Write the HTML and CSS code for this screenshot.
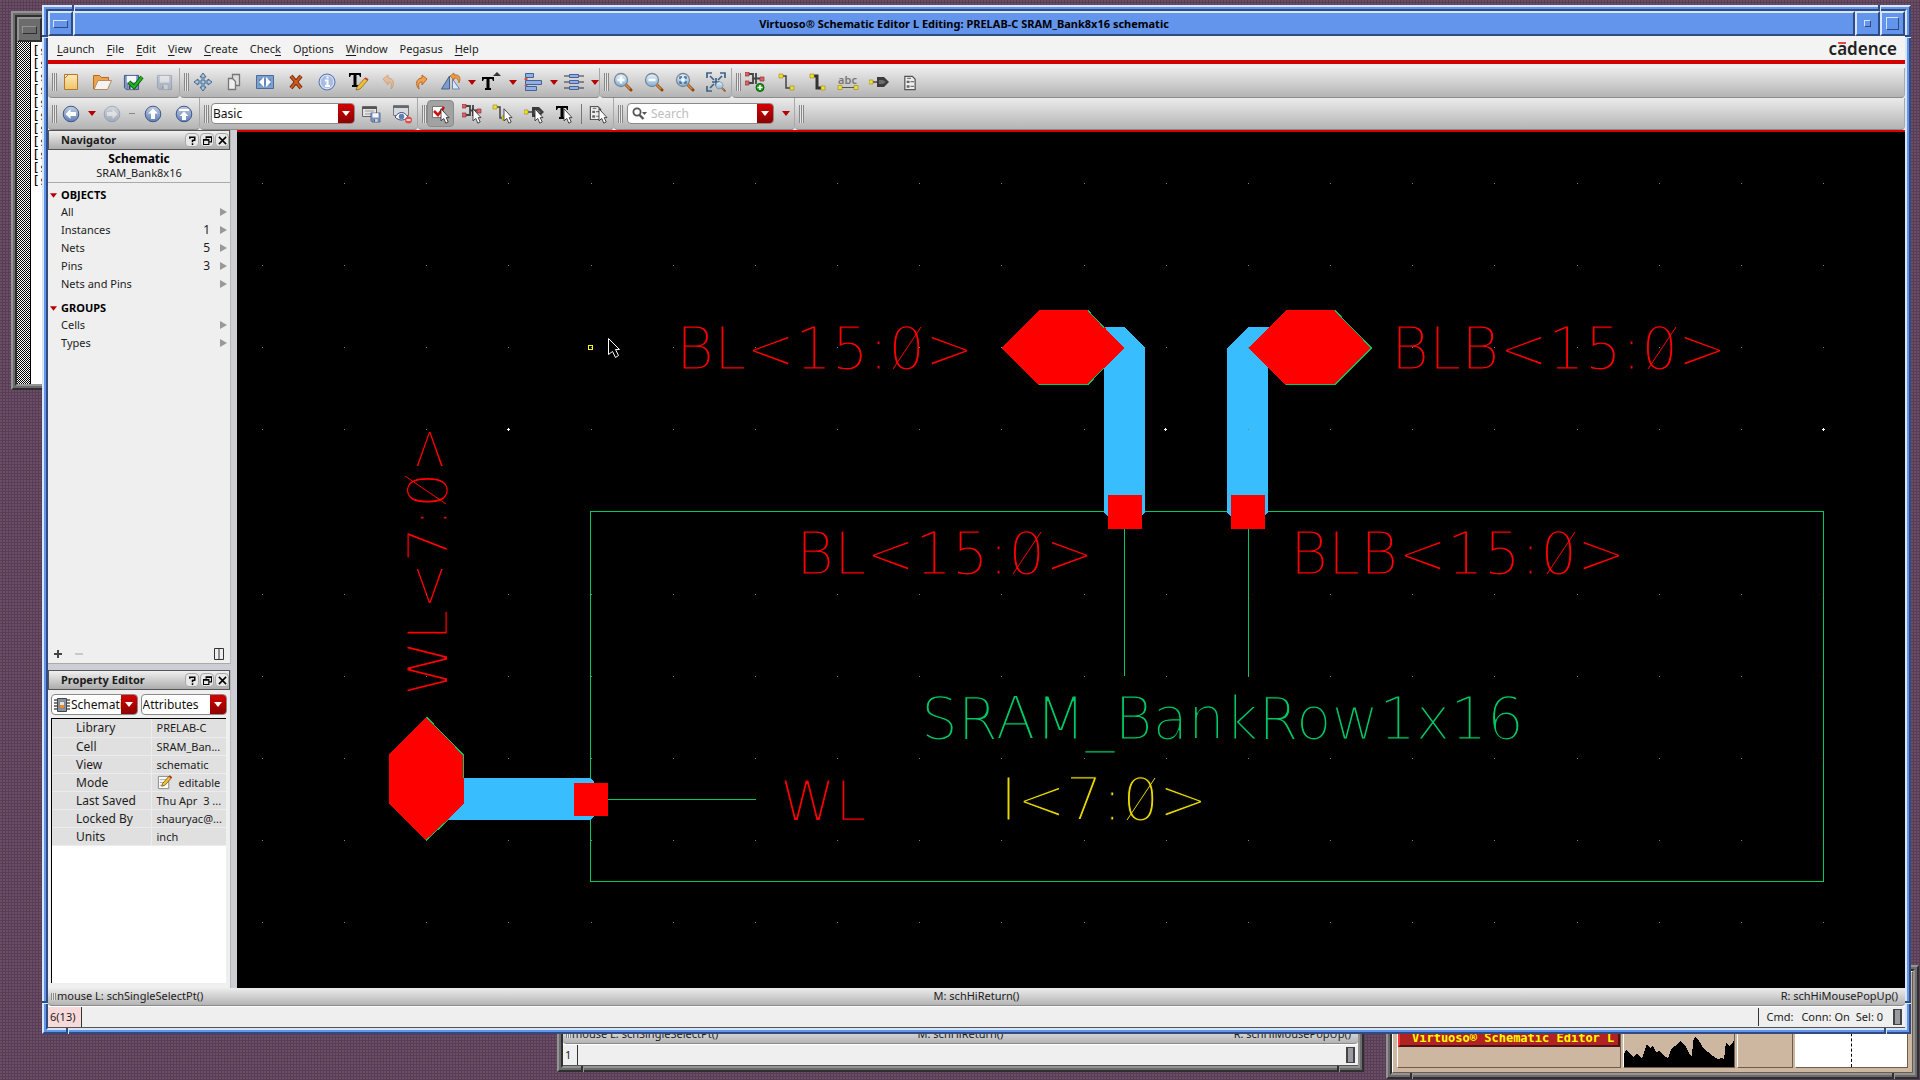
FILE: index.html
```html
<!DOCTYPE html>
<html lang="en">
<head>
<meta charset="utf-8">
<title>Virtuoso Schematic Editor L Editing: PRELAB-C SRAM_Bank8x16 schematic</title>
<link rel="stylesheet" href="styles.css">
</head>
<body>
<svg class="defs" aria-hidden="true">
  <defs>
    <linearGradient id="g-folder" x1="0" y1="0" x2="0" y2="1"><stop offset="0" stop-color="#fdeab8"/><stop offset="1" stop-color="#efc46a"/></linearGradient>
    <linearGradient id="g-round" x1="0" y1="0" x2="0" y2="1"><stop offset="0" stop-color="#c3cfe2"/><stop offset="1" stop-color="#5f7db5"/></linearGradient>
    <linearGradient id="g-lens" x1="0" y1="0" x2="0" y2="1"><stop offset="0" stop-color="#e8f4fc"/><stop offset="1" stop-color="#7fb0d8"/></linearGradient>
    <symbol id="tri" viewBox="0 0 8 5"><path d="M0 0h8L4 5z"/></symbol>
    <symbol id="cursor" viewBox="0 0 12 20"><path d="M1 1v15l3.500-3 2.500 6 3-1.500-2.500-5.500H11z" fill="#fff" stroke="#222"/></symbol>
    <symbol id="disk" viewBox="0 0 18 18"><path d="M1.500 1.500h15v15h-13l-2-2z" fill="#7c97c6" stroke="#3d5280"/><path d="M4 2h10v7H4z" fill="#f4f6fa"/><path d="M5 11h8v5.500H5z" fill="#cfd6e2" stroke="#55658a" stroke-width=".7"/><path d="M6 12h2v4H6z" fill="#33446c"/></symbol>
    <symbol id="round" viewBox="0 0 18 18"><circle cx="9" cy="9" r="7.800" fill="url(#g-round)" stroke="#3e578c"/></symbol>
    <symbol id="lens" viewBox="0 0 20 20"><path d="M12 12l6 6" stroke="#8b4a12" stroke-width="3" stroke-linecap="round"/><path d="M12 12l5 5" stroke="#e08a3a" stroke-width="1.500"/><circle cx="8" cy="8" r="6.500" fill="url(#g-lens)" stroke="#7d868f" stroke-width="1.300"/></symbol>
    <symbol id="doc" viewBox="0 0 14 17"><path d="M1.500 1.500h8l3 3v11h-11z" fill="#eee" stroke="#555" stroke-width="1.300"/><path d="M3.500 6h3v2.500h-3zm0 5h3v2.500h-3z" fill="#666"/><path d="M7.500 7h4m-4 5h4M4 3.500h4" stroke="#777" stroke-width="1.300"/></symbol>
    <symbol id="inst" viewBox="0 0 20 16"><path d="M3 2h5v9H3M11 1v11M8 6.500h9" fill="none" stroke="#444" stroke-width="1.800"/><path d="M0 0h4v4H0zm0 9h4v4H0zm15-4h4v4h-4z" fill="#e06068" stroke="#903038" stroke-width=".7"/></symbol>
    <symbol id="gate" viewBox="0 0 20 10"><path d="M3 5h6" stroke="#444" stroke-width="1.500"/><path d="M0 3h4v4H0z" fill="#f2dc30" stroke="#998a10" stroke-width=".6"/><path d="M8 0h7l5 5-5 5H8z" fill="#3c3c3c"/><path d="M10 3h4l3 2-3 2h-4z" fill="#6c6c6c"/></symbol>
    <symbol id="chipdoc" viewBox="0 0 16 16"><path d="M3.500 1.500h9v13h-9z" fill="#8a93a0" stroke="#444"/><path d="M0 3h3M0 6h3M0 9h3M0 12h3M13 3h3M13 6h3M13 9h3M13 12h3" stroke="#555" stroke-width="1.500"/><path d="M5.500 4.500h5v7h-5z" fill="#dfe4ea" stroke="#666" stroke-width=".6"/><path d="M6 8h4v3H6z" fill="#f08a20"/></symbol>
  </defs>
</svg>

<!-- Terminal behind the editor -->
<section class="window gray terminal" aria-label="Terminal">
  <div class="frame">
    <div class="titlebar"><button class="tb-btn" aria-label="Window menu"><span class="bar"></span></button></div>
    <div class="term-body">
      <div class="term-scroll"></div>
      <pre class="term-text">[s
[s
[s
[s
[s
[s
[s
[s
[s
[s
[s</pre>
    </div>
  </div>
</section>

<!-- Second editor window, mostly hidden -->
<section class="window gray editor-back" aria-label="Second editor">
  <div class="frame">
    <div class="status mouse-row"><span class="grip tiny"></span><span>mouse L: schSingleSelectPt()</span><span class="mid">M: schHiReturn()</span><span class="end">R: schHiMousePopUp()</span></div>
    <div class="status bottom-row"><span class="num">1</span><span class="led"></span></div>
  </div>
  <i class="notch bl"></i><i class="notch br"></i>
</section>

<!-- Front panel -->
<section class="window gray panel" aria-label="Window manager panel">
  <div class="frame">
    <div class="panel-body">
      <div class="tasks"><button class="task">Virtuoso® Schematic Editor L l</button></div>
      <div class="load">
        <svg viewBox="0 0 110 40" preserveAspectRatio="none" shape-rendering="crispEdges"><path d="M0 40V27l2-4 4 3 3 4 4-3 3 2 2 3 3-9 2-6 3 4 3-2 3 6 4-1 4 5 4 2 3-8 3-4 3-1 3-4 3 2 3 4 3 6 3 4 1-16 2-4 3 2 3 5 3 5 4 3 5 4 5 3 3-1 3 1 2-17 3 4 3-2 3-5 3 5 2-4 1 3v26z"/></svg>
      </div>
      <div class="blank"></div>
      <div class="pager"></div>
    </div>
  </div>
  <i class="notch bl"></i><i class="notch br"></i>
</section>

<!-- Schematic editor -->
<main class="window blue editor">
  <div class="frame">
    <header class="titlebar">
      <button class="tb-btn" aria-label="Window menu"><span class="bar"></span></button>
      <h1 class="title">Virtuoso® Schematic Editor L Editing: PRELAB-C SRAM_Bank8x16 schematic</h1>
      <button class="tb-btn" aria-label="Minimize"><span class="dot"></span></button>
      <button class="tb-btn" aria-label="Maximize"><span class="box"></span></button>
    </header>

    <nav class="menubar">
      <button><u>L</u>aunch</button><button><u>F</u>ile</button><button><u>E</u>dit</button><button><u>V</u>iew</button><button><u>C</u>reate</button><button>Chec<u>k</u></button><button>O<u>p</u>tions</button><button><u>W</u>indow</button><button>Pegasus</button><button><u>H</u>elp</button>
      <span class="brand">c<span class="macron">a</span>dence</span>
    </nav>

    <div class="toolbar">
      <div class="group"><span class="grip"></span>
        <button class="tool" aria-label="New"><svg viewBox="0 0 20 20"><path d="M3.500 2.500h13v15h-13z" fill="url(#g-folder)" stroke="#b5782a"/><path d="M3.500 6.500l4-4h-4z" fill="#fff6dc" stroke="#b5782a"/></svg></button>
        <button class="tool" aria-label="Open"><svg viewBox="0 0 20 20"><path d="M1.500 17V3.500h6l2 2h7V10" fill="#eea24c" stroke="#b5691e"/><path d="M2 17.500L6 8.500h13.500l-4 9z" fill="#f4f4f4" stroke="#b98a58"/></svg></button>
        <button class="tool" aria-label="Check and save"><svg viewBox="0 0 20 20"><use href="#disk" x="0" y="2" width="17" height="17"/><path d="M6 10l5 5 8-10" fill="none" stroke="#0a5a0a" stroke-width="4"/><path d="M6 10l5 5 8-10" fill="none" stroke="#22b322" stroke-width="2.400"/></svg></button>
        <button class="tool" aria-label="Save"><svg viewBox="0 0 20 20" opacity=".35"><use href="#disk" x="2" y="2" width="17" height="17"/></svg></button>
      </div>
      <div class="group"><span class="grip"></span>
        <button class="tool" aria-label="Move"><svg viewBox="0 0 20 20"><path d="M10 1l3 4h-2v4h4V7l4 3-4 3v-2h-4v4h2l-3 4-3-4h2v-4H5v2l-4-3 4-3v2h4V5H7z" fill="#a9c7e2" stroke="#44678c"/></svg></button>
        <button class="tool" aria-label="Copy"><svg viewBox="0 0 20 20"><path d="M8.500 2.500h7v11h-7z" fill="#ddd" stroke="#777" stroke-width="1.300"/><path d="M4.500 6.500h4l3 3v8h-7z" fill="#eee" stroke="#777" stroke-width="1.300"/></svg></button>
        <button class="tool" aria-label="Stretch"><svg viewBox="0 0 20 20"><path d="M1.500 3.500h17v13h-17z" fill="#7d9fce" stroke="#4d6b99"/><path d="M4 7h12v6H4z" fill="#5f86bd"/><path d="M9 5v10l-5-5zM11 5v10l5-5z" fill="#fff"/></svg></button>
        <button class="tool" aria-label="Delete"><svg viewBox="0 0 20 20"><path d="M5 4l10 12M15 4L5 16" stroke="#6e2608" stroke-width="4"/><path d="M5 4l10 12M15 4L5 16" stroke="#cf5a1e" stroke-width="2"/></svg></button>
        <button class="tool" aria-label="Properties"><svg viewBox="0 0 20 20"><circle cx="10" cy="10" r="8" fill="#a9bce4" stroke="#5b76b0"/><circle cx="10" cy="10" r="6.700" fill="none" stroke="#dde6f6"/><path d="M8 8.500h2.500v5.500M8 14h5M9.500 5.500h2" stroke="#fff" stroke-width="2" fill="none"/></svg></button>
        <button class="tool" aria-label="Edit label"><svg viewBox="0 0 20 20"><path d="M1 1h12v4h-1l-1-2H8.500v10H10v2H4v-2h1.500V3H3L2 5H1z"/><path d="M8 18l1-3 8-9 3 2-8 9z" fill="#f0c030" stroke="#7a5a10" stroke-width=".7"/><path d="M17 6l3 2" stroke="#c04040" stroke-width="2"/></svg></button>
        <button class="tool" aria-label="Undo"><svg viewBox="0 0 20 20" opacity=".5"><path d="M4 7l5-4v3c6 0 7 7 3 11 1-5-0-7-3-7v3z" fill="#f2a860" stroke="#c87830"/></svg></button>
        <button class="tool" aria-label="Redo"><svg viewBox="0 0 20 20"><path d="M17 7l-5-4v3c-6 0-7 7-3 11-1-5 0-7 3-7v3z" fill="#f2a050" stroke="#b86820"/></svg></button>
        <div class="split"><button class="tool" aria-label="Rotate"><svg viewBox="0 0 20 20"><path d="M8.500 4v13h-8z" fill="#7f9cc8" stroke="#44608f"/><path d="M11.500 7v10h7z" fill="#dde6f4" stroke="#6a83ae"/><path d="M9 4l4-3v2c6-1 7 4 5 8-1-4-2-5-5-5v2z" fill="#ee9a48" stroke="#a8601c" stroke-width=".7"/></svg></button><button class="arrow" aria-label="Rotate options"><svg><use href="#tri"/></svg></button></div>
        <div class="split"><button class="tool" aria-label="Text size"><svg viewBox="0 0 20 20"><path d="M0 5h12v4h-1l-1-2H7.500v9H9v2H3v-2h1.500V7H2L1 9H0z"/><path d="M11 4l4-4 4 4z" fill="#333"/></svg></button><button class="arrow" aria-label="Text options"><svg><use href="#tri"/></svg></button></div>
        <div class="split"><button class="tool" aria-label="Align"><svg viewBox="0 0 20 20"><path d="M2.500 1.500h8v4h-8zM2.500 8.500h16v4h-16zM2.500 14.500h11v4h-11z" fill="#93aee0" stroke="#45619b"/><path d="M3 6v2m0 5v1" stroke="#e05030" stroke-width="3"/></svg></button><button class="arrow" aria-label="Align options"><svg><use href="#tri"/></svg></button></div>
        <div class="split"><button class="tool" aria-label="Distribute"><svg viewBox="0 0 20 20"><path d="M0 4h20M0 10h20M0 16h20" stroke="#333"/><path d="M5.500 2.500h9v3h-9zM5.500 8.500h9v3h-9zM5.500 14.500h9v3h-9z" fill="#93aee0" stroke="#45619b"/></svg></button><button class="arrow" aria-label="Distribute options"><svg><use href="#tri"/></svg></button></div>
      </div>
      <div class="group"><span class="grip"></span>
        <button class="tool" aria-label="Zoom in"><svg viewBox="0 0 20 20"><use href="#lens"/><path d="M8 4.500v7M4.500 8h7" stroke="#fff" stroke-width="2.500"/></svg></button>
        <button class="tool" aria-label="Zoom out"><svg viewBox="0 0 20 20"><use href="#lens"/><path d="M4.500 8h7" stroke="#fff" stroke-width="2.500"/></svg></button>
        <button class="tool" aria-label="Zoom fit"><svg viewBox="0 0 20 20"><use href="#lens"/><path d="M5 7V5h2m2 0h2v2m0 2v2H9m-2 0H5V9" fill="none" stroke="#4a6d98" stroke-width="1.500"/><path d="M6.500 6.500h3v3h-3z" fill="#fff"/></svg></button>
        <button class="tool" aria-label="Zoom to selected"><svg viewBox="0 0 20 20"><path d="M1 6V1h5m8 0h5v5M6 19H1v-5M4 4l4 4m8-4l-4 4m-8 8l4-4M10 6v8m-4-4h8" fill="none" stroke="#3f6288" stroke-width="1.700"/><use href="#lens" x="9" y="9" width="11" height="11"/></svg></button>
      </div>
      <div class="group last"><span class="grip"></span>
        <button class="tool" aria-label="Create instance"><svg viewBox="0 0 20 20"><use href="#inst" width="20" height="16"/><circle cx="15" cy="15.500" r="4" fill="#1d9a1d" stroke="#0c5c0c"/><path d="M15 13v5m-2.500-2.500h5" stroke="#fff" stroke-width="1.500"/></svg></button>
        <button class="tool" aria-label="Create wire"><svg viewBox="0 0 20 20"><path d="M5 4h5v12h5" fill="none" stroke="#444" stroke-width="1.500"/><path d="M3 2h4v4H3zm11 12h4v4h-4z" fill="#f2dc30" stroke="#998a10" stroke-width=".6"/></svg></button>
        <button class="tool" aria-label="Create wide wire"><svg viewBox="0 0 20 20"><path d="M5 4h5v12h5" fill="none" stroke="#333" stroke-width="3"/><path d="M3 2h4v4H3zm11 12h4v4h-4z" fill="#f2dc30" stroke="#998a10" stroke-width=".6"/></svg></button>
        <button class="tool abc" aria-label="Create wire name"><span>abc</span><svg viewBox="0 0 20 5"><path d="M2 2.500h16" stroke="#555"/><path d="M0 .5h4v4H0zm16 0h4v4h-4z" fill="#f2dc30" stroke="#998a10" stroke-width=".6"/></svg></button>
        <button class="tool" aria-label="Create pin"><svg viewBox="0 0 20 20"><use href="#gate" y="5" width="20" height="10"/></svg></button>
        <button class="tool" aria-label="Create note"><svg viewBox="0 0 20 20"><use href="#doc" x="3" y="3" width="14" height="16"/></svg></button>
      </div>
    </div>

    <div class="toolbar second">
      <div class="group"><span class="grip"></span>
        <div class="split"><button class="tool" aria-label="Back"><svg viewBox="0 0 18 18"><use href="#round"/><path d="M3.500 9l5-5v3H14v4H8.500v3z" fill="#fff"/></svg></button><button class="arrow" aria-label="History"><svg><use href="#tri"/></svg></button></div>
        <div class="split"><button class="tool dim" aria-label="Forward"><svg viewBox="0 0 18 18"><use href="#round"/><path d="M14.500 9l-5-5v3H4v4h5.500v3z" fill="#fff"/></svg></button><button class="arrow dash" aria-label="Forward history"></button></div>
        <button class="tool" aria-label="Up"><svg viewBox="0 0 18 18"><use href="#round"/><path d="M9 3.500l5 5h-3V14H7V8.500H4z" fill="#fff"/></svg></button>
        <button class="tool" aria-label="Top"><svg viewBox="0 0 18 18"><use href="#round"/><path d="M4 4h10v2H4zM9 6.500l4.500 4.500H11v4H7v-4H4.500z" fill="#fff"/></svg></button>
      </div>
      <div class="group"><span class="grip"></span>
        <div class="combo workspace"><select aria-label="Workspace"><option>Basic</option></select><span class="drop"><svg><use href="#tri"/></svg></span></div>
        <button class="tool" aria-label="Save workspace"><svg viewBox="0 0 20 20"><path d="M1.500 2.500h14v10h-14z" fill="#e4e4e4" stroke="#666"/><path d="M1 4h15" stroke="#555" stroke-width="2"/><path d="M4 7h9M4 10h9" stroke="#999"/><use href="#disk" x="9" y="8" width="11" height="11"/></svg></button>
        <button class="tool" aria-label="Toggle visibility"><svg viewBox="0 0 20 20"><path d="M1.500 1.500h15v10h-15z" fill="#d6dade" stroke="#777"/><path d="M1 3h16" stroke="#667" stroke-width="2"/><path d="M3 13c4-6 9-6 13 0-4 4-9 4-13 0z" fill="#fff" stroke="#446"/><circle cx="9.500" cy="12.500" r="2.800" fill="#5580b8"/><circle cx="16.500" cy="16" r="3.500" fill="#dd5050"/><path d="M14.500 16h4" stroke="#fff" stroke-width="1.500"/></svg></button>
      </div>
      <div class="group"><span class="grip"></span>
        <button class="tool on" aria-label="Select"><svg viewBox="0 0 20 20"><path d="M1.500 2.500h11v11h-11z" fill="#fff" stroke="#777"/><path d="M3 7l4 4 6-8" fill="none" stroke="#d01010" stroke-width="2.500"/><use href="#cursor" x="9" y="4" width="10" height="16"/></svg></button>
        <button class="tool" aria-label="Select instances"><svg viewBox="0 0 20 20"><use href="#inst" width="20" height="16"/><use href="#cursor" x="10" y="4" width="10" height="16"/></svg></button>
        <button class="tool" aria-label="Select wires"><svg viewBox="0 0 20 20"><path d="M2 3h5v11h4" fill="none" stroke="#444" stroke-width="1.500"/><path d="M0 1h4v4H0zm9 11h4v4H9z" fill="#f2dc30" stroke="#998a10" stroke-width=".6"/><use href="#cursor" x="10" y="4" width="10" height="16"/></svg></button>
        <button class="tool" aria-label="Select pins"><svg viewBox="0 0 20 20"><use href="#gate" y="3" width="20" height="10"/><use href="#cursor" x="10" y="4" width="10" height="16"/></svg></button>
        <button class="tool" aria-label="Select text"><svg viewBox="0 0 20 20"><path d="M1 2h12v4h-1l-1-2H8.500v9H10v2H4v-2h1.500V4H3L2 6H1z"/><use href="#cursor" x="8" y="4" width="10" height="16"/></svg></button>
        <span class="rule"></span>
        <button class="tool" aria-label="Selection filter"><svg viewBox="0 0 20 20"><use href="#doc" x="1" y="1" width="13" height="16"/><use href="#cursor" x="10" y="4" width="10" height="16"/></svg></button>
      </div>
      <div class="group"><span class="grip"></span>
        <div class="combo search"><svg class="mag" viewBox="0 0 16 14"><circle cx="5" cy="5" r="3.600" fill="none" stroke="#555" stroke-width="1.800"/><path d="M7.500 8l4 4" stroke="#555" stroke-width="2.400"/><path d="M10 5h5l-2.500 3z" fill="#555"/></svg><input type="text" placeholder="Search" aria-label="Search"><span class="drop"><svg><use href="#tri"/></svg></span></div>
        <button class="arrow wide" aria-label="Search options"><svg><use href="#tri"/></svg></button>
      </div>
      <div class="group last"><span class="grip"></span></div>
    </div>

    <div class="work">
      <aside class="side">
        <section class="dock nav">
          <h2 class="dock-head"><span>Navigator</span><button aria-label="Help"><svg viewBox="0 0 10 10"><path d="M2 3V1.500h5.500V4.500L5 5v2M5 8v2" fill="none" stroke="#000" stroke-width="1.700"/></svg></button><button aria-label="Float"><svg viewBox="0 0 10 10"><path d="M3.500 3V1h6v5.500H7M3 1.500h7M.5 4h6v5.500h-6zM0 4.500h7" fill="none" stroke="#000" stroke-width="1.300"/></svg></button><button aria-label="Close"><svg viewBox="0 0 10 10"><path d="M1 1l8 8M9 1L1 9" stroke="#000" stroke-width="1.700"/></svg></button></h2>
          <div class="cellview"><strong>Schematic</strong><span>SRAM_Bank8x16</span></div>
          <h3><svg class="red-tri"><use href="#tri"/></svg>OBJECTS</h3>
          <ul>
            <li><span>All</span><i></i></li>
            <li><span>Instances</span><b>1</b><i></i></li>
            <li><span>Nets</span><b>5</b><i></i></li>
            <li><span>Pins</span><b>3</b><i></i></li>
            <li><span>Nets and Pins</span><i></i></li>
          </ul>
          <h3><svg class="red-tri"><use href="#tri"/></svg>GROUPS</h3>
          <ul>
            <li><span>Cells</span><i></i></li>
            <li><span>Types</span><i></i></li>
          </ul>
          <div class="dock-foot"><button aria-label="Add"><svg viewBox="0 0 10 10"><path d="M5 1v8M1 5h8" stroke="#444" stroke-width="2"/></svg></button><button aria-label="Remove"><svg viewBox="0 0 10 10"><path d="M1 5h8" stroke="#bbb" stroke-width="1.500"/></svg></button><button class="cols" aria-label="Columns"><svg viewBox="0 0 10 12"><path d="M.5.5h9v11h-9zM5 0v12" fill="none" stroke="#333"/></svg></button></div>
        </section>
        <section class="dock props">
          <h2 class="dock-head"><span>Property Editor</span><button aria-label="Help"><svg viewBox="0 0 10 10"><path d="M2 3V1.500h5.500V4.500L5 5v2M5 8v2" fill="none" stroke="#000" stroke-width="1.700"/></svg></button><button aria-label="Float"><svg viewBox="0 0 10 10"><path d="M3.500 3V1h6v5.500H7M3 1.500h7M.5 4h6v5.500h-6zM0 4.500h7" fill="none" stroke="#000" stroke-width="1.300"/></svg></button><button aria-label="Close"><svg viewBox="0 0 10 10"><path d="M1 1l8 8M9 1L1 9" stroke="#000" stroke-width="1.700"/></svg></button></h2>
          <div class="pickers">
            <div class="combo"><svg class="chip"><use href="#chipdoc"/></svg><select aria-label="Object type"><option>Schematic</option></select><span class="drop"><svg><use href="#tri"/></svg></span></div>
            <div class="combo"><select aria-label="Property group"><option>Attributes</option></select><span class="drop"><svg><use href="#tri"/></svg></span></div>
          </div>
          <div class="sheet">
            <table>
              <tr><th scope="row">Library</th><td>PRELAB-C</td></tr>
              <tr><th scope="row">Cell</th><td>SRAM_Ban...</td></tr>
              <tr><th scope="row">View</th><td>schematic</td></tr>
              <tr><th scope="row">Mode</th><td><span class="mode"><svg viewBox="0 0 16 16"><path d="M1.500 1.500h11v13h-11z" fill="#fafafa" stroke="#888"/><path d="M3 5h7M3 8h6M3 11h4" stroke="#aaa"/><path d="M5 12l1-3 7-8 2.500 2L8.500 11z" fill="#f0c030" stroke="#6a5010" stroke-width=".8"/><path d="M13 1l2.500 2" stroke="#c03030" stroke-width="2"/></svg>editable</span></td></tr>
              <tr><th scope="row">Last Saved</th><td>Thu Apr&nbsp; 3 ...</td></tr>
              <tr><th scope="row">Locked By</th><td>shauryac@...</td></tr>
              <tr><th scope="row">Units</th><td>inch</td></tr>
            </table>
          </div>
        </section>
      </aside>

      <div class="canvas">
        <svg viewBox="237 132 1668 856" role="img" aria-label="SRAM_Bank8x16 schematic">
          <g class="outline">
            <rect x="590.500" y="511.500" width="1233" height="370"/>
            <path d="M1124.500 529v147M1248.500 529v147M608 799.500h148"/>
          </g>
          <g class="label red">
            <text x="676" y="369">BL&lt;15:0&gt;</text>
            <text x="1391" y="369">BLB&lt;15:0&gt;</text>
            <text x="796" y="574">BL&lt;15:0&gt;</text>
            <text x="1290" y="574">BLB&lt;15:0&gt;</text>
            <text class="wl" x="780" y="820">WL</text>
            <text class="wl" transform="translate(447 696) rotate(-90)">WL&lt;7:0&gt;</text>
          </g>
          <text class="label green" x="921" y="739">SRAM_BankRow1x16</text>
          <text class="label yellow" x="1000" y="820">I&lt;7:0&gt;</text>
          <g class="slash">
            <path class="on-red" d="M893 369l28-42M1648 369l28-42M1013 574l28-42M1547 574l28-42M446 504l-41-28"/>
            <path class="on-yellow" d="M1127 820l28-42"/>
          </g>
          <g class="wire">
            <path d="M1085 327h39l21 21v164l-3 4h-35l-3-4V348z"/>
            <path d="M1290 327h-42l-21 21v164l3 4h35l3-4V348z"/>
            <path d="M430 778h160l4 4v34l-4 4H430z"/>
          </g>
          <g class="grid">
            <path d="M262 183.500H1826M262 265.500H1826M262 347.500H1826M262 429.500H1826M262 594.500H1826M262 676.500H1826M262 758.500H1826M262 840.500H1826M262 922.500H1826"/>
            <path class="major" d="M507 429.500h3M508.500 428v3M1164 429.500h3M1165.500 428v3M1822 429.500h3M1823.500 428v3"/>
          </g>
          <g class="pin">
            <path d="M1001 348l38-38h49l36 38-36 37h-49z"/>
            <path d="M1248 348l38-38h49l37 38-37 37h-49z"/>
            <path d="M389 755l37-38 38 38v49l-38 37-37-37z"/>
            <path class="edge" d="M1088 310.500l16 17M1104 368l-16 16.500h-49M1335 310.500l36.500 37.500-36.500 36.500h-49M426.500 717l37 38v23M448 820l-22 20.500"/>
            <path d="M1108 495h34v34h-34zM1231 495h34v34h-34zM574 783h34v33h-34z"/>
          </g>
          <rect class="snap" x="588.500" y="345.500" width="4" height="4"/>
          <path class="pointer" d="M608.500 338.500v16l4-3 3 6 3-2-3-6h4z"/>
        </svg>
      </div>
    </div>

    <footer>
      <div class="status mouse-row"><span class="grip tiny"></span><span>mouse L: schSingleSelectPt()</span><span class="mid">M: schHiReturn()</span><span class="end">R: schHiMousePopUp()</span></div>
      <div class="status bottom-row"><span class="num pink">6(13)</span><span class="cmd">Cmd:</span><span>Conn: On</span><span>Sel: 0</span><span class="led"></span></div>
    </footer>
  </div>
  <i class="notch tl"></i><i class="notch tr"></i><i class="notch lt"></i><i class="notch rt"></i><i class="notch bl"></i><i class="notch br"></i><i class="notch lb"></i><i class="notch rb"></i>
</main>
</body>
</html>
```
FILE: styles.css
```css
* { box-sizing: border-box; }

html, body { height: 100%; margin: 0; }

body {
  position: relative;
  overflow: hidden;
  font: 11px/18px "Noto Sans", sans-serif;
  color: #1c1c1c;
  background-color: #573e56;
  background-image: radial-gradient(circle at 1px 1px, #6b4e64 1px, transparent 1px);
  background-size: 3px 3px;
}

button, input, select { font: inherit; color: inherit; margin: 0; padding: 0; border: 0; background: none; }
h1, h2, h3, ul, pre { margin: 0; padding: 0; font: inherit; list-style: none; }
svg { display: block; }
.defs { position: absolute; width: 0; height: 0; }

/* Motif window frames */
.blue { --lt: #d6e6ff; --mid: #6495ed; --dk: #2f4b80; }
.gray { --lt: #949494; --mid: #6c6c6c; --dk: #2e3030; }

.window {
  position: absolute;
  padding: 2px;
  background: var(--mid);
  border: 2px solid;
  border-color: var(--lt) var(--dk) var(--dk) var(--lt);
}
.frame {
  height: 100%;
  display: flex;
  flex-direction: column;
  border: 2px solid;
  border-color: var(--dk) var(--lt) var(--lt) var(--dk);
  background: #efefef;
  overflow: hidden;
}
.editor { left: 42px; right: 9px; top: 5px; bottom: 46px; }
.terminal { left: 11px; top: 11px; width: 400px; height: 379px; }
.editor-back { left: 557px; width: 807px; top: 900px; bottom: 8px; }
.editor-back .frame { justify-content: flex-end; }
.panel { left: 1386px; right: 1px; top: 965px; bottom: 1px; }

.notch { position: absolute; }
.tl, .tr, .bl, .br { width: 3px; height: 6px; border-left: 2px solid var(--dk); border-right: 1px solid var(--lt); }
.lt, .rt, .lb, .rb { width: 6px; height: 3px; border-top: 2px solid var(--dk); border-bottom: 1px solid var(--lt); }
.tl { left: 28px; top: -2px; }
.tr { right: 28px; top: -2px; }
.bl { left: 22px; bottom: -2px; }
.br { right: 22px; bottom: -2px; }
.lt { left: -2px; top: 28px; }
.rt { right: -2px; top: 28px; }
.lb { left: -2px; bottom: 28px; }
.rb { right: -2px; bottom: 28px; }

.titlebar { flex: none; display: flex; height: 25px; background: var(--dk); }
.tb-btn, .title {
  border: 2px solid;
  border-color: var(--lt) var(--dk) var(--dk) var(--lt);
  background: var(--mid);
}
.tb-btn { flex: none; width: 25px; display: grid; place-items: center; }
.title { flex: 1; text-align: center; font-weight: bold; line-height: 22px; color: #000; }
.tb-btn span { border: 1px solid; border-color: var(--lt) var(--dk) var(--dk) var(--lt); }
.bar { width: 15px; height: 8px; }
.dot { width: 7px; height: 7px; }
.box { width: 13px; height: 13px; }

/* Menu bar */
.menubar {
  flex: none;
  display: flex;
  gap: 12px;
  align-items: center;
  height: 28px;
  padding: 2px 8px 0 9px;
  background: #f3f3f3;
  border-bottom: 4px solid #d20000;
}
.menubar u { text-underline-offset: 2px; }
.brand { margin-left: auto; font-weight: 600; font-size: 17px; color: #222; }
.macron { position: relative; }
.macron::before { content: ""; position: absolute; left: 1px; right: 1px; top: 5px; height: 2px; background: #e84848; }

/* Tool bars */
.toolbar { flex: none; display: flex; height: 34px; padding-top: 4px; }
.toolbar.second { height: 32px; padding: 0; }
.group {
  display: flex;
  align-items: center;
  gap: 4px;
  padding: 0 2px 1px 4px;
  background: linear-gradient(#ebebeb, #b4b4b4);
  border-bottom: 1px solid #8b8b8b;
  border-right: 1px solid #a8a8a8;
  border-radius: 0 0 4px 4px;
}
.second .group { padding-bottom: 0; }
.group.last { flex: 1; }
.grip {
  flex: none;
  width: 5px;
  height: 18px;
  margin-right: -4px;
  background: repeating-linear-gradient(90deg, #888 0 1px, #e6e6e6 1px 2px);
}
.tool { flex: none; width: 27px; height: 27px; display: grid; place-items: center; }
.tool svg { width: 20px; height: 20px; overflow: visible; }
.tool.dim svg { opacity: .35; }
.tool.on { background: #a2a2a2; border: 1px solid #8c8c8c; border-radius: 4px; }
.tool.abc { align-content: center; font-size: 11px; line-height: 10px; font-weight: 600; color: #777; }
.tool.abc svg { height: 5px; }
.second .split .tool svg, .second .group:first-child .tool svg { width: 18px; height: 18px; }
.split { display: flex; }
.arrow { width: 10px; display: flex; align-items: center; padding-left: 4px; fill: #b40000; }
.arrow svg { flex: none; width: 8px; height: 5px; }
.arrow.wide { width: 14px; }
.arrow.dash::before { content: ""; width: 8px; height: 1px; background: #888; }
.rule { width: 1px; height: 20px; margin: 0 -2px 0 -1px; background: #777; }

.combo {
  position: relative;
  display: flex;
  align-items: center;
  height: 21px;
  overflow: hidden;
  border: 1px solid #8a8a8a;
  border-radius: 4px;
  background: #fff;
  font-size: 12px;
}
.combo select, .combo input { appearance: none; flex: 1; min-width: 0; height: 100%; padding: 0 0 0 1px; outline: 0; color: #111; overflow: hidden; }
.combo .drop { flex: none; align-self: stretch; width: 16px; display: grid; place-items: center; fill: #fff; background: linear-gradient(#d40000, #8c0000); pointer-events: none; }
.drop svg { width: 8px; height: 5px; }
.workspace { width: 144px; margin: 0 -2px 0 2px; }
.search { width: 147px; margin-left: 4px; }
.search .mag { width: 16px; height: 14px; margin: 0 2px 0 4px; }
.search input::placeholder { color: #bdbdbd; opacity: 1; }

/* Work area */
.work { flex: 1; min-height: 0; display: flex; }
.side {
  flex: none;
  width: 189px;
  display: grid;
  grid-template-rows: 89fr 53fr;
  gap: 6px;
  padding-right: 6px;
  background: #cdced3;
}
.dock { min-height: 0; display: flex; flex-direction: column; background: #efefef; border-right: 1px solid #b8b8b8; }
.dock-head {
  display: flex;
  align-items: center;
  gap: 1px;
  height: 20px;
  padding-left: 12px;
  font-weight: bold;
  border: 1px solid #555;
  background: linear-gradient(#f0f0f0, #acacac);
}
.dock-head span { flex: 1; }
.dock-head button { width: 14px; height: 14px; display: grid; place-items: center; border: 1px solid #aaa; border-radius: 4px; background: #e8e8e8; }
.dock-head svg { width: 9px; height: 9px; }
.cellview { display: flex; flex-direction: column; text-align: center; line-height: 14px; height: 33px; padding-top: 2px; border-bottom: 1px solid #aaa; }
.cellview strong { font-size: 12px; color: #000; }
.nav h3 { display: flex; align-items: center; gap: 4px; height: 20px; margin-top: 2px; padding-left: 2px; font-weight: bold; color: #000; }
.nav ul + h3 { margin-top: 5px; }
.red-tri { width: 7px; height: 5px; fill: #b40000; }
.nav li { display: flex; align-items: center; height: 18px; padding: 0 3px 0 13px; }
.nav ul { margin-top: -2px; }
.nav li span { flex: 1; }
.nav li b { font-weight: normal; font-size: 12px; margin-right: 10px; }
.nav li i { border: 4px solid transparent; border-left: 7px solid #999; border-right: 0; }
.dock-foot { margin-top: auto; display: flex; align-items: center; gap: 11px; height: 20px; padding: 0 6px 0 5px; border-bottom: 1px solid #aaa; }
.dock-foot svg { width: 10px; height: 12px; }
.cols { margin-left: auto; }

.pickers { display: grid; grid-template-columns: 1fr 1fr; gap: 3px; padding: 4px 3px 3px; }
.chip { flex: none; width: 16px; height: 16px; margin: 0 0 0 2px; }
.sheet { flex: 1; margin: 0 4px 5px 3px; background: #fff; border-top: 1px solid #000; border-left: 1px solid #000; }
.sheet table { width: 100%; border-collapse: collapse; table-layout: fixed; }
.sheet th, .sheet td { height: 18px; padding: 0 0 0 5px; line-height: 17px; text-align: left; font-weight: normal; white-space: nowrap; background: #e0e0e0; border-bottom: 1px solid #ececec; }
.sheet th { width: 99px; padding-left: 24px; font-size: 12px; border-right: 1px solid #ececec; }
.mode { display: flex; align-items: center; gap: 7px; height: 17px; }
.mode svg { width: 15px; height: 15px; }

/* Drawing area */
.canvas { flex: 1; min-width: 0; background: #000; border-top: 2px solid #d20000; }
.canvas svg { width: 100%; height: 100%; }
.grid path { fill: none; stroke: #7c7c88; stroke-dasharray: 1 81.16; shape-rendering: crispEdges; }
.grid .major { stroke: #fff; stroke-dasharray: none; }
.outline { fill: none; stroke: #00c864; shape-rendering: crispEdges; }
.wire { fill: #38bdff; shape-rendering: crispEdges; }
.pin { fill: #f00; shape-rendering: crispEdges; }
.edge { fill: none; stroke: #00c864; }
.label { font: 200 58px "DejaVu Sans Light", "DejaVu Sans", sans-serif; stroke: #000; stroke-width: 1px; }
.wl { font-size: 56px; }
.red { fill: #f00; }
.green { fill: #00c864; }
.yellow { fill: #e6d800; }
.slash { fill: none; stroke-width: 1px; }
.on-red { stroke: #f00; }
.on-yellow { stroke: #e6d800; }
.snap { fill: none; stroke: #ff0; }
.pointer { fill: #000; stroke: #fff; }

/* Status lines */
.status { display: flex; align-items: center; }
.mouse-row { position: relative; height: 18px; padding: 0 7px 1px 3px; background: linear-gradient(#ededed, #b4b4b4); border-bottom: 1px solid #8b8b8b; border-radius: 0 0 4px 4px; line-height: 16px; }
.mouse-row .tiny { height: 7px; margin-right: 1px; }
.mouse-row .mid { position: absolute; left: 0; right: 0; text-align: center; }
.mouse-row .end { margin-left: auto; }
.bottom-row { height: 22px; gap: 6px; padding-right: 3px; border-top: 1px solid #fff; border-bottom: 1px solid #555; }
.num { align-self: stretch; line-height: 20px; margin-right: auto; padding: 0 6px 0 2px; border-right: 1px solid #333; }
.pink { background: #f8dada; }
.cmd { margin-right: 2px; padding-left: 7px; border-left: 1px solid #333; }
.led { width: 9px; height: 16px; margin-left: 4px; border: 1px solid #444; border-width: 1px 2px; background: #9a9aa2; }
footer { flex: none; }

/* Terminal */
.term-body { flex: 1; display: flex; background: #fff; }
.term-scroll { width: 14px; border-right: 1px solid #000; background: repeating-conic-gradient(#000 0 25%, #fff 0 50%) 0 0 / 2px 2px; }
.term-text { padding: 2px 1px; font: 13px/13px "DejaVu Sans Mono", monospace; color: #000; }

/* Front panel */
.panel-body {
  flex: 1;
  display: grid;
  grid-template-columns: 224px 112px 56px 1fr;
  gap: 2px;
  padding: 4px;
  background: #cdb7a0;
  border: 1px solid;
  border-color: #fff #6e5c4c #6e5c4c #fff;
}
.panel-body > * { border: 1px solid; border-color: #fff #6e5c4c #6e5c4c #fff; }
.tasks { display: flex; align-items: flex-end; padding-bottom: 20px; }
.task { width: 100%; height: 24px; overflow: hidden; white-space: nowrap; text-align: left; padding: 5px 0 0 12px; font: bold 12px/14px "DejaVu Sans Mono", monospace; color: #ff0; background: #b22222; border: 2px solid; border-color: #f33 #4c1414 #4c1414 #f33; }
.load { display: flex; align-items: flex-end; }
.load svg { width: 100%; height: 40px; }
.pager { background: #fff; display: flex; justify-content: center; }
.pager::before { content: ""; border-left: 1px dashed #000; }
```
